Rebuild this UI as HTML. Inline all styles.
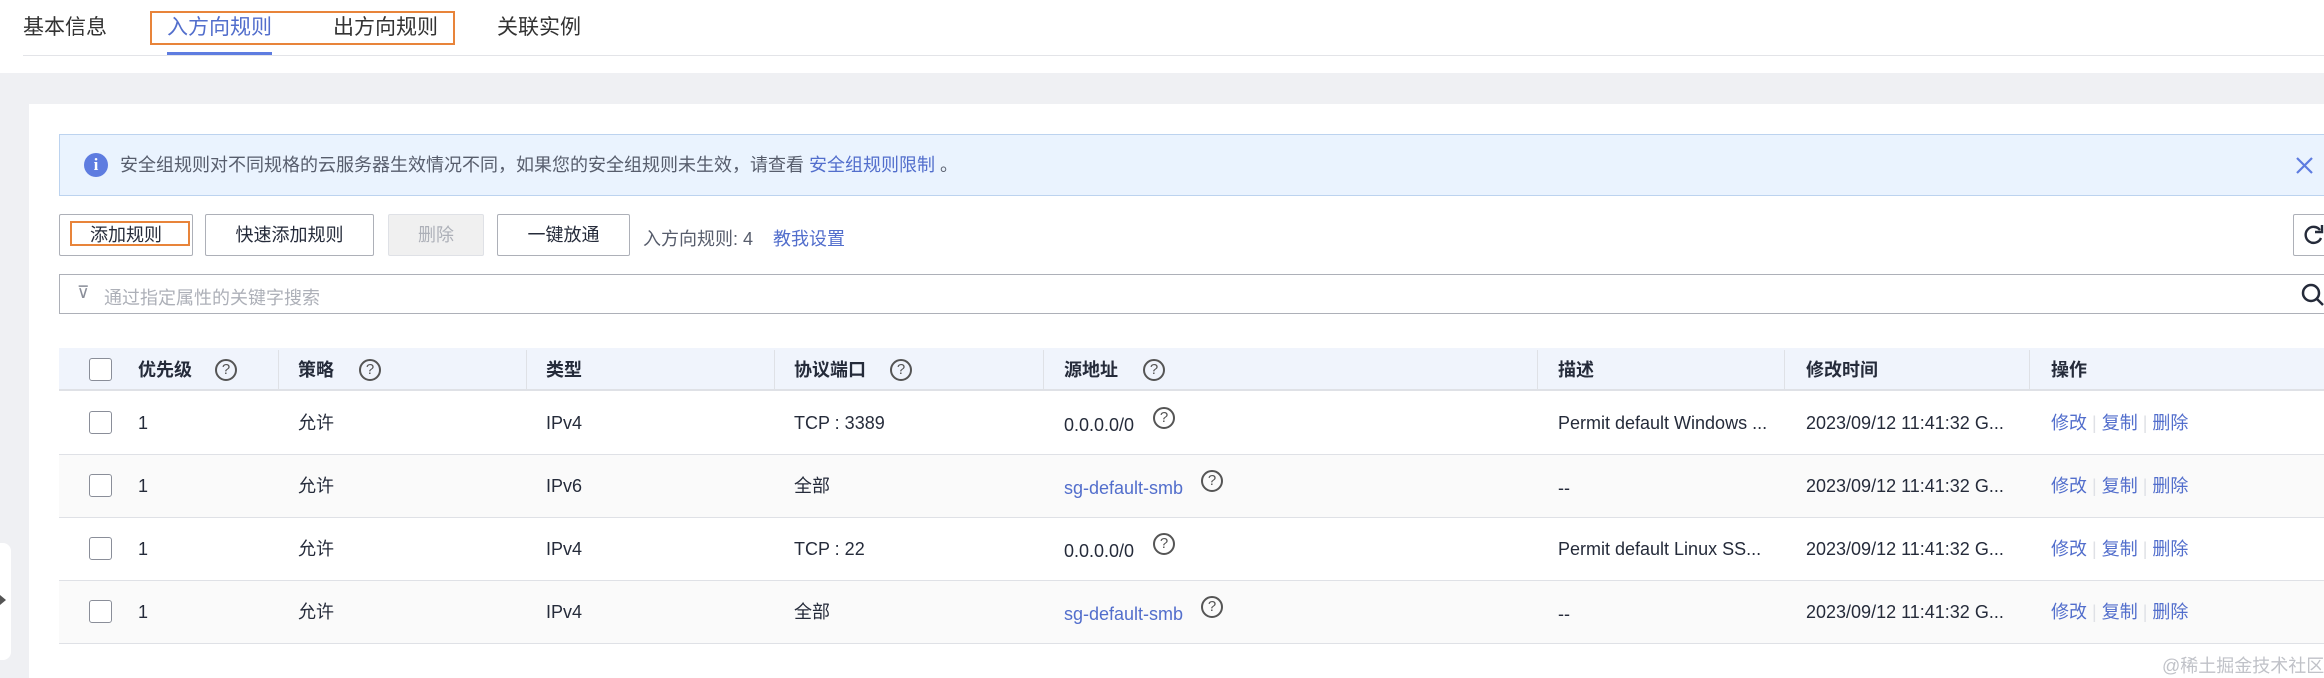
<!DOCTYPE html>
<html><head><meta charset="utf-8"><style>
*{box-sizing:border-box;margin:0;padding:0}
body{width:2324px;height:678px;overflow:hidden;background:#eff0f3;font-family:"Liberation Sans","Noto Sans CJK SC",sans-serif;color:#252b3a;position:relative}
.a{position:absolute;white-space:nowrap}
.hdr{left:0;top:0;width:2324px;height:73px;background:#fff}
.tab{top:15px;font-size:21px;color:#333;line-height:26px}
.card{left:29px;top:104px;width:2295px;height:574px;background:#fff}
.btn{top:214px;height:42px;border:1px solid #adb0b8;border-radius:2px;background:#fff;font-size:18px;line-height:40px;text-align:center;color:#252b3a}
.link{color:#526ecc}
.cell{font-size:18px;line-height:20px}
.th{font-weight:bold;font-size:18px;line-height:22px}
.q{display:inline-block;width:22px;height:22px;border:2px solid #555;border-radius:50%;font-size:15px;line-height:18px;text-align:center;color:#555;font-weight:normal}
.cb{width:23px;height:23px;border:1.5px solid #8a8e99;border-radius:3px;background:#fff}
.sep{width:1px;background:#dfe1e6}
</style></head><body>
<div class="a hdr"></div>
<div class="a tab" style="left:23px">基本信息</div>
<div class="a tab" style="left:167px;color:#526ecc">入方向规则</div>
<div class="a tab" style="left:333px">出方向规则</div>
<div class="a tab" style="left:497px">关联实例</div>
<div class="a" style="left:23px;top:55px;width:2301px;height:1px;background:#e3e4e8"></div>
<div class="a" style="left:167px;top:52px;width:105px;height:3px;background:#5e7ce0"></div>
<div class="a" style="left:150px;top:11px;width:305px;height:34px;border:2px solid #e8843a"></div>
<div class="a" style="left:0;top:543px;width:11px;height:117px;background:#fff;border-radius:0 8px 8px 0"></div>
<div class="a" style="left:0;top:595px;width:0;height:0;border-left:6px solid #555;border-top:5px solid transparent;border-bottom:5px solid transparent"></div>
<div class="a card"></div>
<div class="a" style="left:59px;top:134px;width:2265px;height:62px;background:#eaf3fe;border:1px solid #bcd3ef;border-right:none"></div>
<div class="a" style="left:84px;top:153px;width:24px;height:24px;border-radius:50%;background:#5e7ce0;color:#fff;font-weight:bold;font-size:17px;line-height:24px;text-align:center;font-family:'Liberation Serif',serif">i</div>
<div class="a" style="left:120px;top:154px;font-size:18px;line-height:22px;color:#575d6c">安全组规则对不同规格的云服务器生效情况不同，如果您的安全组规则未生效，请查看 <span class="link">安全组规则限制</span> 。</div>
<svg class="a" style="left:2296px;top:157px" width="17" height="17"><path d="M1 1L16 16M16 1L1 16" stroke="#5e7ce0" stroke-width="2.2"/></svg>
<div class="a btn" style="left:59px;width:134px">添加规则</div>
<div class="a" style="left:70px;top:221px;width:120px;height:25px;border:2px solid #e8843a"></div>
<div class="a btn" style="left:205px;width:169px">快速添加规则</div>
<div class="a btn" style="left:388px;width:96px;background:#f0f0f0;border-color:#dfe1e6;color:#adb0b8">删除</div>
<div class="a btn" style="left:497px;width:133px">一键放通</div>
<div class="a" style="left:643px;top:225px;font-size:18px;color:#575d6c">入方向规则: 4</div>
<div class="a link" style="left:773px;top:225px;font-size:18px">教我设置</div>
<div class="a" style="left:2293px;top:214px;width:40px;height:42px;border:1px solid #adb0b8;border-radius:2px"></div>
<svg class="a" style="left:2303px;top:224px" width="21" height="22"><path d="M17 6A8 8 0 1 0 18 14" fill="none" stroke="#252b3a" stroke-width="2.4"/><path d="M19 1V8H12" fill="none" stroke="#252b3a" stroke-width="2.4"/></svg>
<div class="a" style="left:59px;top:274px;width:2265px;height:40px;border:1px solid #adb0b8;border-right:none"></div>
<div class="a" style="left:77px;top:283px;font-size:17px;color:#8a8e99">⊽</div>
<div class="a" style="left:104px;top:284px;font-size:18px;color:#adb0b8">通过指定属性的关键字搜索</div>
<svg class="a" style="left:2300px;top:282px" width="24" height="24"><circle cx="11" cy="11" r="8" fill="none" stroke="#252b3a" stroke-width="2.5"/><path d="M17 17l6 6" stroke="#252b3a" stroke-width="2.5"/></svg>
<div class="a" style="left:59px;top:348px;width:2265px;height:43px;background:#f0f4fc;border-bottom:2px solid #dfe1e6"></div>
<div class="a sep" style="left:278px;top:350px;height:39px"></div>
<div class="a sep" style="left:526px;top:350px;height:39px"></div>
<div class="a sep" style="left:774px;top:350px;height:39px"></div>
<div class="a sep" style="left:1043px;top:350px;height:39px"></div>
<div class="a sep" style="left:1537px;top:350px;height:39px"></div>
<div class="a sep" style="left:1784px;top:350px;height:39px"></div>
<div class="a sep" style="left:2029px;top:350px;height:39px"></div>
<div class="a cb" style="left:89px;top:358px"></div>
<div class="a th" style="left:138px;top:359px">优先级</div><div class="a q" style="left:215px;top:359px">?</div>
<div class="a th" style="left:298px;top:359px">策略</div><div class="a q" style="left:359px;top:359px">?</div>
<div class="a th" style="left:546px;top:359px">类型</div>
<div class="a th" style="left:794px;top:359px">协议端口</div><div class="a q" style="left:890px;top:359px">?</div>
<div class="a th" style="left:1064px;top:359px">源地址</div><div class="a q" style="left:1143px;top:359px">?</div>
<div class="a th" style="left:1558px;top:359px">描述</div>
<div class="a th" style="left:1806px;top:359px">修改时间</div>
<div class="a th" style="left:2051px;top:359px">操作</div>

<div class="a" style="left:59px;top:454px;width:2265px;height:63px;background:#fafafa"></div>
<div class="a" style="left:59px;top:580px;width:2265px;height:63px;background:#fafafa"></div>
<div class="a" style="left:59px;top:454px;width:2265px;height:1px;background:#dfe1e6"></div>
<div class="a" style="left:59px;top:517px;width:2265px;height:1px;background:#dfe1e6"></div>
<div class="a" style="left:59px;top:580px;width:2265px;height:1px;background:#dfe1e6"></div>
<div class="a" style="left:59px;top:643px;width:2265px;height:1px;background:#dfe1e6"></div>

<div class="a cb" style="left:89px;top:411px"></div><div class="a cb" style="left:89px;top:474px"></div><div class="a cb" style="left:89px;top:537px"></div><div class="a cb" style="left:89px;top:600px"></div>

<div class="a cell" style="left:138px;top:413px">1</div><div class="a cell" style="left:298px;top:413px">允许</div><div class="a cell" style="left:546px;top:413px">IPv4</div><div class="a cell" style="left:794px;top:413px">TCP : 3389</div><div class="a cell" style="left:1064px;top:415px">0.0.0.0/0</div><div class="a q" style="left:1153px;top:407px">?</div><div class="a cell" style="left:1558px;top:413px">Permit default Windows ...</div><div class="a cell" style="left:1806px;top:413px">2023/09/12 11:41:32 G...</div>
<div class="a cell" style="left:138px;top:476px">1</div><div class="a cell" style="left:298px;top:476px">允许</div><div class="a cell" style="left:546px;top:476px">IPv6</div><div class="a cell" style="left:794px;top:476px">全部</div><div class="a cell link" style="left:1064px;top:478px">sg-default-smb</div><div class="a q" style="left:1201px;top:470px">?</div><div class="a cell" style="left:1558px;top:478px">--</div><div class="a cell" style="left:1806px;top:476px">2023/09/12 11:41:32 G...</div>
<div class="a cell" style="left:138px;top:539px">1</div><div class="a cell" style="left:298px;top:539px">允许</div><div class="a cell" style="left:546px;top:539px">IPv4</div><div class="a cell" style="left:794px;top:539px">TCP : 22</div><div class="a cell" style="left:1064px;top:541px">0.0.0.0/0</div><div class="a q" style="left:1153px;top:533px">?</div><div class="a cell" style="left:1558px;top:539px">Permit default Linux SS...</div><div class="a cell" style="left:1806px;top:539px">2023/09/12 11:41:32 G...</div>
<div class="a cell" style="left:138px;top:602px">1</div><div class="a cell" style="left:298px;top:602px">允许</div><div class="a cell" style="left:546px;top:602px">IPv4</div><div class="a cell" style="left:794px;top:602px">全部</div><div class="a cell link" style="left:1064px;top:604px">sg-default-smb</div><div class="a q" style="left:1201px;top:596px">?</div><div class="a cell" style="left:1558px;top:604px">--</div><div class="a cell" style="left:1806px;top:602px">2023/09/12 11:41:32 G...</div>

<div class="a cell link" style="left:2051px;top:413px">修改 <span style="color:#dfe1e6">|</span> 复制 <span style="color:#dfe1e6">|</span> 删除</div>
<div class="a cell link" style="left:2051px;top:476px">修改 <span style="color:#dfe1e6">|</span> 复制 <span style="color:#dfe1e6">|</span> 删除</div>
<div class="a cell link" style="left:2051px;top:539px">修改 <span style="color:#dfe1e6">|</span> 复制 <span style="color:#dfe1e6">|</span> 删除</div>
<div class="a cell link" style="left:2051px;top:602px">修改 <span style="color:#dfe1e6">|</span> 复制 <span style="color:#dfe1e6">|</span> 删除</div>
<div class="a" style="left:2162px;top:652px;font-size:18px;color:#c0c2c8">@稀土掘金技术社区</div>
</body></html>
